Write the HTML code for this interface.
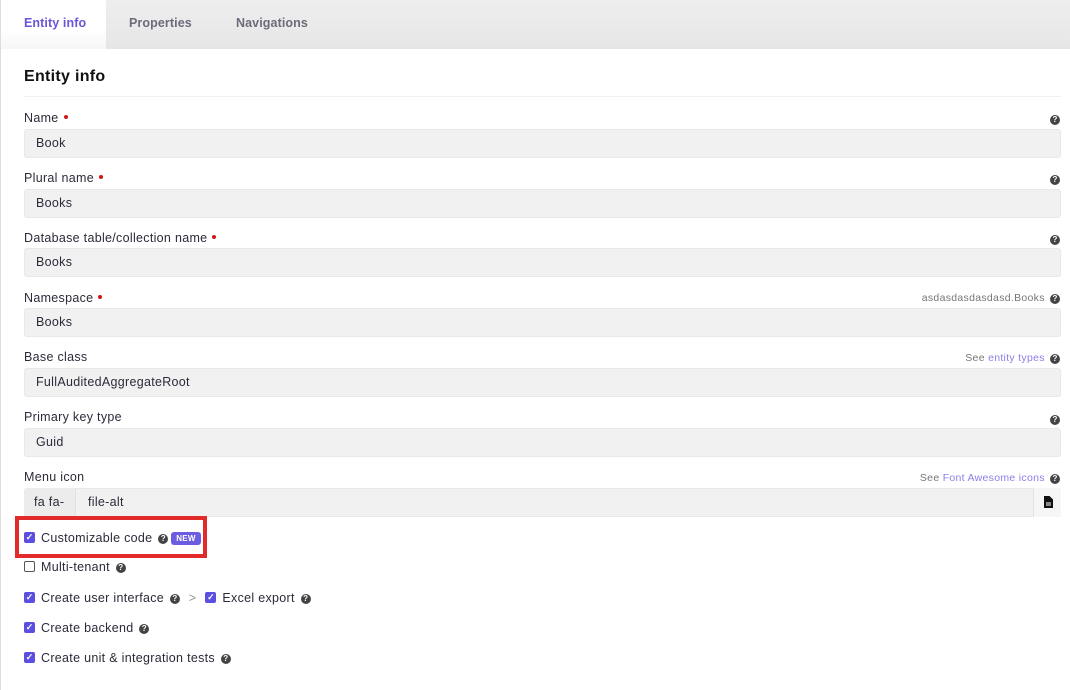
<!DOCTYPE html>
<html><head><meta charset="utf-8"><style>
*{box-sizing:border-box;margin:0;padding:0}
body{width:1070px;height:690px;overflow:hidden;background:#fff;font-family:"Liberation Sans",sans-serif;color:#2b2b3a;font-size:12.5px;position:relative;letter-spacing:0.3px}
.lb{position:absolute;left:0;top:0;width:1px;height:690px;background:#ddd}
.tabs{position:absolute;left:1px;top:0;width:1069px;height:49px;background:linear-gradient(#eeeeee,#e6e6e6)}
.tab{position:absolute;top:0;height:49px;line-height:47px;font-size:12.5px;font-weight:bold;color:#6b6b7c;letter-spacing:0.1px}
.tab.a{left:0;width:105px;background:linear-gradient(#fff 60%,#f6f6f8);color:#6b55d8;padding-left:23px}
h2{position:absolute;left:24px;top:68px;font-size:16px;font-weight:bold;color:#111}
.hr{position:absolute;left:24px;right:9px;top:96px;height:1px;background:#f0f0f0}
.l{position:absolute;left:24px;font-size:12.5px}
.l i{display:inline-block;width:4px;height:4px;border-radius:50%;background:#d01818;margin-left:5px;vertical-align:3px}
.in{position:absolute;left:24px;width:1037px;height:29px;background:#f1f1f1;border:1px solid #e8e8e8;border-radius:3px;padding-left:11px;line-height:27px;font-size:12.5px}
.r{position:absolute;right:10px;font-size:10.5px;color:#777}
.r a{color:#8a7fe8;text-decoration:none}
.q{display:inline-block;width:10px;height:10px;border-radius:50%;background:#444;color:#fff;font-size:8px;font-weight:bold;text-align:center;line-height:10px;vertical-align:0px;margin-left:2px;letter-spacing:0}
.cb{position:absolute;left:24px;font-size:12.5px}
.cb b{display:inline-block;width:11px;height:11px;border-radius:2px;background:#5b4ee0;color:#fff;font-size:9px;line-height:11px;text-align:center;margin-right:6px;vertical-align:2px;font-weight:bold;letter-spacing:0}
.cb b.e{background:#fff;border:1px solid #555;color:transparent;line-height:9px}
.cb .q{vertical-align:1px}
.new{display:inline-block;background:#6c5ce0;color:#fff;font-size:8px;font-weight:bold;border-radius:3px;padding:2px 5px;vertical-align:1px;margin-left:3px}
.red{position:absolute;left:15px;top:516px;width:192px;height:42px;border:4px solid #e32a2a}
</style></head><body>
<div class="lb"></div>
<div class="tabs">
<div class="tab a">Entity info</div>
<div class="tab" style="left:128px">Properties</div>
<div class="tab" style="left:235px">Navigations</div>
</div>
<h2>Entity info</h2>
<div class="hr"></div>

<div class="l" style="top:111px">Name<i></i></div><div class="r" style="top:113px"><span class="q">?</span></div>
<div class="in" style="top:129px">Book</div>
<div class="l" style="top:171px">Plural name<i></i></div><div class="r" style="top:173px"><span class="q">?</span></div>
<div class="in" style="top:189px">Books</div>
<div class="l" style="top:231px">Database table/collection name<i></i></div><div class="r" style="top:233px"><span class="q">?</span></div>
<div class="in" style="top:248px">Books</div>
<div class="l" style="top:291px">Namespace<i></i></div><div class="r" style="top:292px">asdasdasdasdasd.Books <span class="q">?</span></div>
<div class="in" style="top:308px">Books</div>
<div class="l" style="top:350px">Base class</div><div class="r" style="top:352px">See <a>entity types</a> <span class="q">?</span></div>
<div class="in" style="top:368px">FullAuditedAggregateRoot</div>
<div class="l" style="top:410px">Primary key type</div><div class="r" style="top:413px"><span class="q">?</span></div>
<div class="in" style="top:428px">Guid</div>
<div class="l" style="top:470px">Menu icon</div><div class="r" style="top:472px">See <a>Font Awesome icons</a> <span class="q">?</span></div>
<div class="in" style="top:488px;padding-left:63px">file-alt</div>
<div style="position:absolute;left:24px;top:488px;width:52px;height:29px;background:#ececec;border-right:1px solid #e2e2e2;line-height:29px;padding-left:10px;border-radius:3px 0 0 3px">fa fa-</div>
<div style="position:absolute;left:1033px;top:488px;width:28px;height:29px;background:#f6f6f6;border-left:1px solid #e2e2e2"><svg style="position:absolute;left:10px;top:8px" width="9" height="12" viewBox="0 0 9 12"><path d="M0 0H5.5L9 3.5V12H0Z" fill="#111"/><rect x="2" y="6.5" width="5" height="1" fill="#fff"/><rect x="2" y="8.5" width="5" height="1" fill="#fff"/></svg></div>

<div class="cb" style="top:531px"><b>✓</b>Customizable code <span class="q">?</span><span class="new">NEW</span></div>
<div class="red"></div>
<div class="cb" style="top:560px"><b class="e">✓</b>Multi-tenant <span class="q">?</span></div>
<div class="cb" style="top:591px"><b>✓</b>Create user interface <span class="q">?</span><span style="color:#999;margin:0 9px 0 9px">&gt;</span><b>✓</b>Excel export <span class="q">?</span></div>
<div class="cb" style="top:621px"><b>✓</b>Create backend <span class="q">?</span></div>
<div class="cb" style="top:651px"><b>✓</b>Create unit &amp; integration tests <span class="q">?</span></div>
</body></html>
